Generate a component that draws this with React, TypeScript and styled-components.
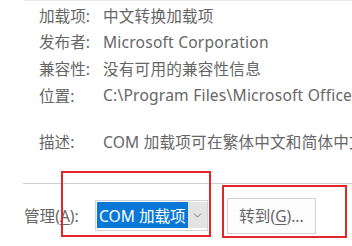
import { Fragment } from 'react';
import styled, { createGlobalStyle } from 'styled-components';
import { ChevronDown } from 'lucide-react';

const GlobalStyle = createGlobalStyle`
  body {
    margin: 0;
    background: #fff;
    font-family: "Noto Sans", "Noto Sans CJK SC", sans-serif;
    color: #666;
  }
`;

const Frame = styled.div`
  position: relative;
  width: 352px;
  height: 246px;
  overflow: hidden;
  background: #fff;
`;

const TopRule = styled.div`
  margin-left: 24px;
  border-top: 1px solid #ebebeb;
`;

const InfoGrid = styled.div`
  display: grid;
  grid-template-columns: 64px 1fr;
  grid-auto-rows: 26.6px;
  padding: 1px 0 0 39px;
  font-size: 15.6px;
  white-space: nowrap;
`;

const DescRow = styled(InfoGrid)`
  margin-top: 20px;
  padding-top: 0;
`;

const Label = styled.div`
  display: flex;
  align-items: center;
`;

const Value = styled.div`
  display: flex;
  align-items: center;
  letter-spacing: 0.2px;
`;

const Separator = styled.div`
  margin: 28px 0 0 23px;
  border-top: 1px solid #cdcdcd;
`;

const ManageBar = styled.div`
  display: flex;
  align-items: center;
  height: 36px;
  margin-top: 14px;
  padding-left: 24px;
  font-size: 15.6px;
  white-space: nowrap;

  u {
    text-decoration: underline;
    text-underline-offset: 2px;
  }
`;

const ManageLabel = styled.span`
  width: 71px;
`;

const Combo = styled.div`
  display: flex;
  align-items: stretch;
  width: 113px;
  height: 31px;
  box-sizing: border-box;
  border: 1px solid #d4d4d4;
  padding: 1px 0 2px 1px;
`;

const ComboValue = styled.div`
  flex: 1;
  display: flex;
  align-items: center;
  padding-left: 2px;
  background: #0a78d7;
  color: #fff;
`;

const ComboArrow = styled.div`
  width: 19px;
  display: flex;
  align-items: center;
  justify-content: center;
  background: #e3e3e3;
  color: #6b6b6b;
`;

const GoButton = styled.div`
  display: flex;
  align-items: center;
  justify-content: center;
  width: 89px;
  height: 36px;
  box-sizing: border-box;
  margin-left: 19px;
  border: 1px solid #d2d2d2;
  background: #fdfdfd;
`;

// red annotation frames drawn over the screenshot
const Highlight = styled.div<{ $left: number; $top: number; $w: number; $h: number }>`
  position: absolute;
  left: ${({ $left }) => $left}px;
  top: ${({ $top }) => $top}px;
  width: ${({ $w }) => $w}px;
  height: ${({ $h }) => $h}px;
  box-sizing: border-box;
  border: 2px solid #e3262c;
  pointer-events: none;
`;

const rows: [string, string][] = [
  ['加载项:', '中文转换加载项'],
  ['发布者:', 'Microsoft Corporation'],
  ['兼容性:', '没有可用的兼容性信息'],
  ['位置:', 'C:\\Program Files\\Microsoft Office\\root\\Office16'],
];

export default function App() {
  return (
    <Frame>
      <GlobalStyle />
      <TopRule />
      <InfoGrid>
        {rows.map(([k, v]) => (
          <Fragment key={k}>
            <Label>{k}</Label>
            <Value>{v}</Value>
          </Fragment>
        ))}
      </InfoGrid>
      <DescRow>
        <Label>描述:</Label>
        <Value>COM 加载项可在繁体中文和简体中文之间转换</Value>
      </DescRow>
      <Separator />
      <ManageBar>
        <ManageLabel>
          管理(<u>A</u>):
        </ManageLabel>
        <Combo>
          <ComboValue>COM 加载项</ComboValue>
          <ComboArrow>
            <ChevronDown size={13} strokeWidth={1.6} />
          </ComboArrow>
        </Combo>
        <GoButton>
          转到(<u>G</u>)...
        </GoButton>
      </ManageBar>
      <Highlight $left={61} $top={171} $w={150} $h={66} />
      <Highlight $left={222} $top={185} $w={125} $h={53} />
    </Frame>
  );
}
